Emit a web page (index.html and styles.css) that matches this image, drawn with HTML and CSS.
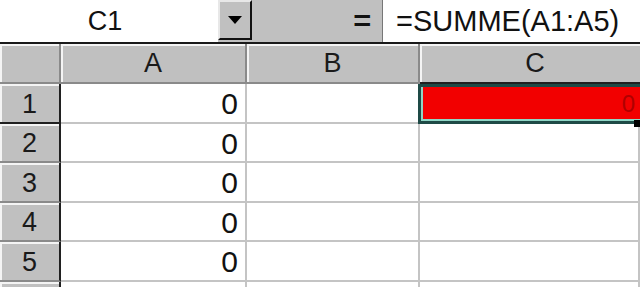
FILE: index.html
```html
<!DOCTYPE html>
<html lang="de">
<head>
  <meta charset="UTF-8">
  <title>Tabelle1</title>
  <link rel="stylesheet" href="styles.css">
</head>
<body>
  <div class="formula-bar">
    <div class="name-box">C1</div>
    <div class="drop-btn"><span class="arrow"></span></div>
    <div class="bar-gap"><span class="equals">=</span></div>
    <div class="formula">=SUMME(A1:A5)</div>
  </div>

  <div class="sheet">
    <div class="hdr corner"></div>
    <div class="hdr col">A</div>
    <div class="hdr col">B</div>
    <div class="hdr col active-col">C</div>

    <div class="hdr row active-row">1</div>
    <div class="cell num">0</div>
    <div class="cell"></div>
    <div class="cell selected"><span>0</span></div>

    <div class="hdr row">2</div>
    <div class="cell num">0</div>
    <div class="cell"></div>
    <div class="cell"></div>

    <div class="hdr row">3</div>
    <div class="cell num">0</div>
    <div class="cell"></div>
    <div class="cell"></div>

    <div class="hdr row">4</div>
    <div class="cell num">0</div>
    <div class="cell"></div>
    <div class="cell"></div>

    <div class="hdr row">5</div>
    <div class="cell num">0</div>
    <div class="cell"></div>
    <div class="cell"></div>

    <!-- row 6 only peeks in at the bottom edge -->
    <div class="hdr row stub"></div>
    <div class="cell stub"></div>
    <div class="cell stub"></div>
    <div class="cell stub"></div>
  </div>
</body>
</html>
```

FILE: styles.css
```css
body {
  margin: 0;
  width: 640px;
  height: 287px;
  overflow: hidden;
  background: #fff;
  font-family: "Liberation Sans", Arial, sans-serif;
  color: #111;
}

/* formula bar */
.formula-bar {
  display: flex;
  height: 42px;
  border-bottom: 2px solid #1a1a1a;
  background: #c0c0c0;
}

.name-box {
  width: 218px;
  background: #fff;
  font-size: 27px;
  line-height: 42px;
  text-align: center;
  padding-right: 8px;
  box-sizing: border-box;
}

.drop-btn {
  width: 34px;
  height: 40px;
  box-sizing: border-box;
  background: #c0c0c0;
  border-top: 2px solid #e8e8e8;
  border-left: 2px solid #e8e8e8;
  border-right: 2px solid #111;
  border-bottom: 2px solid #111;
  display: flex;
  align-items: center;
  justify-content: center;
}

.arrow {
  width: 0;
  height: 0;
  border-left: 7px solid transparent;
  border-right: 7px solid transparent;
  border-top: 8px solid #000;
}

.bar-gap {
  width: 131px;
  display: flex;
  align-items: center;
  justify-content: flex-end;
  padding-right: 12px;
  box-sizing: border-box;
  border-right: 1px solid #777;
}

.equals {
  font-size: 28px;
  font-weight: bold;
  transform: scaleX(1.1);
}

.formula {
  flex: 1;
  background: #fff;
  font-size: 29px;
  line-height: 42px;
  padding-left: 13px;
  white-space: nowrap;
}

/* sheet grid */
.sheet {
  display: grid;
  grid-template-columns: 61px 186px 173px 220px;
  grid-template-rows: 40px 40px 39px 40px 39px 40px 5px;
  width: 640px;
  overflow: hidden;
}

.hdr {
  background: #c0c0c0;
  box-sizing: border-box;
  box-shadow: inset 2px 2px 0 #f4f4f4;
  border-right: 2px solid #8a8a8a;
  border-bottom: 2px solid #8a8a8a;
  display: flex;
  align-items: center;
  justify-content: center;
  font-size: 27px;
  color: #1a1a1a;
}

.hdr.col {
  padding-left: 0;
}

.active-col {
  padding-left: 10px !important;
}

.hdr.row {
  border-right: 2px solid #202020;
  padding-top: 2px;
}

.corner {
  border-right: 2px solid #8a8a8a;
}

.active-col {
  border-bottom: 2px solid #202020;
  border-right: none;
}

.active-row {
  border-bottom: 2px solid #202020;
}

.cell {
  box-sizing: border-box;
  border-right: 2px solid #c4c4c4;
  border-bottom: 2px solid #c4c4c4;
  font-size: 30px;
  display: flex;
  align-items: center;
  justify-content: flex-end;
  padding-right: 7px;
  padding-top: 2px;
}

.stub {
  border-bottom: none;
}

.selected {
  position: relative;
  background: #f20000;
  color: #b00000;
  padding-right: 5px;
  font-size: 24px;
  border-right: none;
}

.selected::before {
  content: "";
  position: absolute;
  left: -2px;
  top: 0;
  width: 220px;
  bottom: -2px;
  border: 3px solid #1e4a46;
  box-shadow: inset 0 -2px 0 #8fd6c6, inset 2px 0 0 #8fd6c6;
}

.selected::after {
  content: "";
  position: absolute;
  left: 214px;
  bottom: -5px;
  width: 7px;
  height: 7px;
  background: #000;
}
```
